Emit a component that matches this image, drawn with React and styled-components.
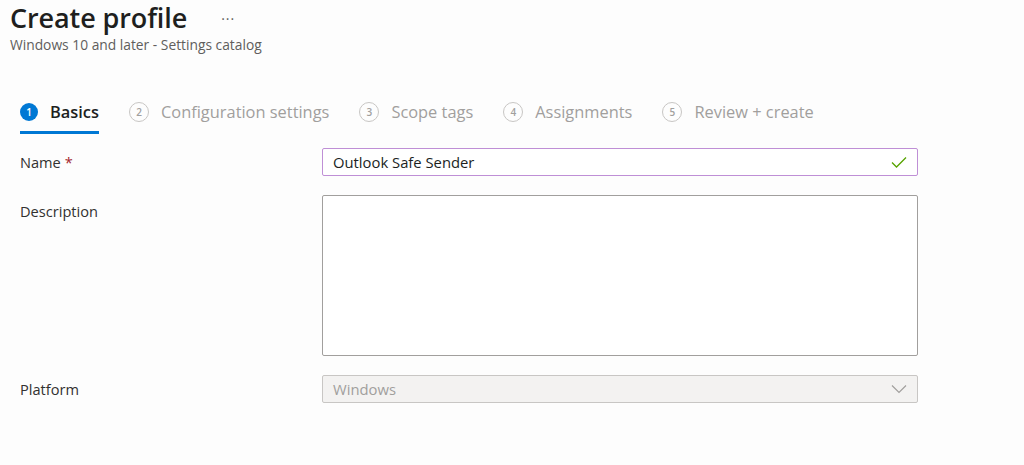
import React from 'react';
import styled, { createGlobalStyle } from 'styled-components';

const GlobalStyle = createGlobalStyle`
  body {
    margin: 0;
    background: #fdfdfd;
    font-family: "Open Sans", "Noto Sans", sans-serif;
    color: #323130;
  }
`;

const Page = styled.div`
  width: 1024px;
  height: 465px;
  overflow: hidden;
  box-sizing: border-box;
  padding: 0 0 0 10px;
`;

const Header = styled.div`
  display: flex;
  align-items: baseline;
  gap: 34px;
`;

const Title = styled.h1`
  margin: 0;
  font-size: 27px;
  font-weight: 600;
  line-height: 36px;
  color: #201f1e;
  letter-spacing: -0.1px;
`;

const More = styled.span`
  font-size: 14px;
  color: #605e5c;
  letter-spacing: 1px;
  position: relative;
  top: -4px;
`;

const Subtitle = styled.div`
  font-size: 13.8px;
  color: #605e5c;
  line-height: 18px;
`;

const Steps = styled.div`
  display: flex;
  margin: 40px 0 0 10px;
  gap: 30px;
`;

const Step = styled.div`
  display: flex;
  align-items: center;
  gap: 12px;
  height: 40px;
  border-bottom: 3px solid ${p => (p.$active ? '#0078d4' : 'transparent')};
  box-sizing: border-box;
  padding-bottom: 2px;
`;

const Num = styled.span`
  width: ${p => (p.$active ? 18 : 20)}px;
  height: ${p => (p.$active ? 18 : 20)}px;
  border-radius: 50%;
  box-sizing: border-box;
  display: flex;
  align-items: center;
  justify-content: center;
  font-size: 10px;
  font-weight: 600;
  background: ${p => (p.$active ? '#0078d4' : 'transparent')};
  color: ${p => (p.$active ? '#fff' : '#a19f9d')};
  border: ${p => (p.$active ? 'none' : '1.5px solid #c8c6c4')};
`;

const StepLabel = styled.span`
  font-size: 16.4px;
  color: ${p => (p.$active ? '#201f1e' : '#a19f9d')};
  font-weight: ${p => (p.$active ? 600 : 400)};
`;

const Form = styled.div`
  display: grid;
  grid-template-columns: 302px 596px;
  row-gap: 19px;
  margin: 14px 0 0 10px;
`;

const Label = styled.div`
  font-size: 14.6px;
  color: #323130;
  display: flex;
  align-items: ${p => (p.$top ? 'flex-start' : 'center')};
  padding-top: ${p => (p.$top ? '6px' : '0')};
`;

const Req = styled.span`
  color: #a4262c;
  margin-left: 4px;
`;

const Field = styled.div`
  height: ${p => p.$h || 28}px;
  box-sizing: border-box;
  border: 1px solid ${p => p.$border || '#8a8886'};
  border-radius: 2px;
  background: ${p => p.$bg || '#fff'};
  display: flex;
  align-items: center;
  justify-content: space-between;
  padding: 0 10px;
`;

const Value = styled.span`
  font-size: 14.8px;
  color: ${p => (p.$muted ? '#a19f9d' : '#201f1e')};
`;

const Check = () => (
  <svg width="16" height="12" viewBox="0 0 16 12">
    <path d="M1 6.5 L5.5 11 L15 1.5" fill="none" stroke="#57a300" strokeWidth="1.3" />
  </svg>
);

const Chevron = () => (
  <svg width="16" height="10" viewBox="0 0 16 10">
    <path d="M1 1.5 L8 8.5 L15 1.5" fill="none" stroke="#a19f9d" strokeWidth="1.2" />
  </svg>
);

const steps = ['Basics', 'Configuration settings', 'Scope tags', 'Assignments', 'Review + create'];

export default function App() {
  return (
    <Page>
      <GlobalStyle />
      <Header>
        <Title>Create profile</Title>
        <More>···</More>
      </Header>
      <Subtitle>Windows 10 and later - Settings catalog</Subtitle>
      <Steps>
        {steps.map((s, i) => (
          <Step key={s} $active={i === 0}>
            <Num $active={i === 0}>{i + 1}</Num>
            <StepLabel $active={i === 0}>{s}</StepLabel>
          </Step>
        ))}
      </Steps>
      <Form>
        <Label>Name<Req>*</Req></Label>
        <Field $border="#bf8fd6">
          <Value>Outlook Safe Sender</Value>
          <Check />
        </Field>
        <Label $top>Description</Label>
        <Field $h={161} $border="#a19f9d" />
        <Label>Platform</Label>
        <Field $bg="#f3f2f1" $border="#c8c6c4">
          <Value $muted>Windows</Value>
          <Chevron />
        </Field>
      </Form>
    </Page>
  );
}
